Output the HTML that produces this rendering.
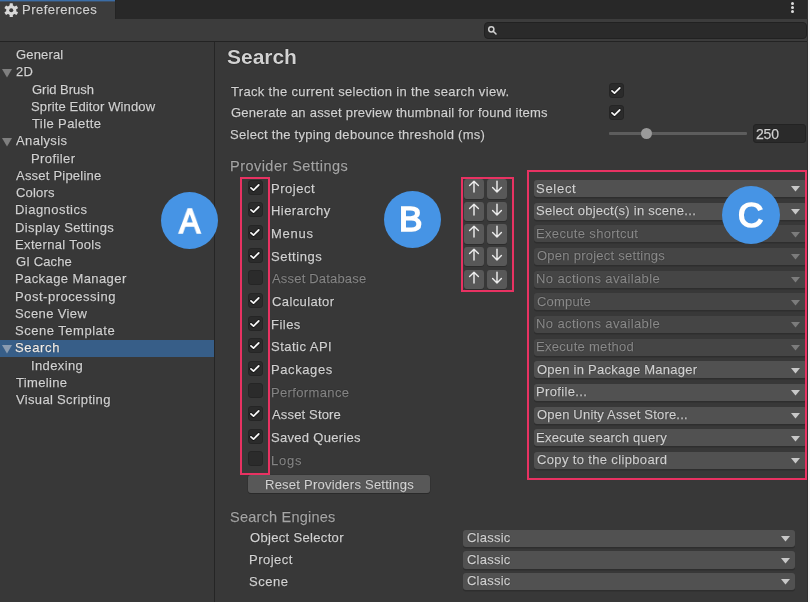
<!DOCTYPE html><html><head><meta charset="utf-8"><style>
html,body{margin:0;padding:0}
body{width:810px;height:602px;overflow:hidden;position:relative;background:#383838;font-family:"Liberation Sans",sans-serif;-webkit-font-smoothing:antialiased}
.t{position:absolute;white-space:nowrap;-webkit-text-stroke:0.25px currentColor;will-change:transform;text-shadow:0 0 0.8px rgba(0,0,0,0.9),0 0 0.8px rgba(0,0,0,0.9)}
</style></head><body>
<div style="position:absolute;left:0.00px;top:0.00px;width:810.00px;height:18.70px;background:#282828"></div>
<div style="position:absolute;left:0.00px;top:0.00px;width:115.00px;height:18.70px;background:#3c3c3c"></div>
<div style="position:absolute;left:0.00px;top:0.00px;width:115.00px;height:1.00px;background:#3b6da6"></div>
<div style="position:absolute;left:0.00px;top:1.00px;width:115.00px;height:1.00px;background:#3c4f66"></div>
<div style="position:absolute;left:115.00px;top:0.00px;width:1.00px;height:18.70px;background:#242424"></div>
<svg style="position:absolute;left:3.6px;top:2.5px" width="14.5" height="14.5" viewBox="-7.25 -7.25 14.5 14.5"><g fill="#d8d8d8">
<circle r="5"/>
<rect x="-1.6" y="-7" width="3.2" height="14" rx="0.6"/>
<rect x="-1.6" y="-7" width="3.2" height="14" rx="0.6" transform="rotate(60)"/>
<rect x="-1.6" y="-7" width="3.2" height="14" rx="0.6" transform="rotate(120)"/>
</g><circle r="2" fill="#3c3c3c"/></svg>
<div class="t" style="left:22.00px;top:1.30px;font-size:13px;line-height:17px;color:#d2d2d2;letter-spacing:0.470px;font-weight:normal;">Preferences</div>
<div style="position:absolute;left:791.15px;top:1.80px;width:3.2px;height:3.2px;border-radius:50%;background:#dcdcdc"></div>
<div style="position:absolute;left:791.15px;top:5.90px;width:3.2px;height:3.2px;border-radius:50%;background:#dcdcdc"></div>
<div style="position:absolute;left:791.15px;top:10.00px;width:3.2px;height:3.2px;border-radius:50%;background:#dcdcdc"></div>
<div style="position:absolute;left:0.00px;top:18.70px;width:810.00px;height:22.30px;background:#3c3c3c"></div>
<div style="position:absolute;left:0.00px;top:41.00px;width:810.00px;height:1.00px;background:#232323"></div>
<div style="position:absolute;left:483.70px;top:21.70px;width:323.00px;height:17.20px;background:#2a2a2a;border-radius:4px;box-sizing:border-box;border:1px solid #212121"></div>
<svg style="position:absolute;left:486px;top:24px" width="12" height="12" viewBox="0 0 12 12"><circle cx="5.3" cy="5.3" r="2.6" fill="none" stroke="#d0d0d0" stroke-width="1.5"/><path d="M7.2 7.2 L10 10" stroke="#d0d0d0" stroke-width="1.6" stroke-linecap="round"/></svg>
<div style="position:absolute;left:807.00px;top:0.00px;width:1.00px;height:602.00px;background:#303030"></div>
<div style="position:absolute;left:808.00px;top:0.00px;width:2.00px;height:602.00px;background:#f4f4f4"></div>
<div style="position:absolute;left:0.00px;top:340.00px;width:214.00px;height:17.00px;background:#375e88"></div>
<div class="t" style="left:16.40px;top:46.00px;font-size:13px;line-height:17px;color:#d2d2d2;letter-spacing:0.150px;font-weight:normal;">General</div>
<div class="t" style="left:16.40px;top:63.25px;font-size:13px;line-height:17px;color:#d2d2d2;letter-spacing:0.200px;font-weight:normal;">2D</div>
<svg style="position:absolute;left:2px;top:68.75px" width="10" height="9" viewBox="0 0 10 9"><path d="M0 0 H10 L5 8.6 Z" fill="#7f7f7f"/></svg>
<div class="t" style="left:31.60px;top:80.50px;font-size:13px;line-height:17px;color:#d2d2d2;letter-spacing:-0.011px;font-weight:normal;">Grid Brush</div>
<div class="t" style="left:30.60px;top:97.75px;font-size:13px;line-height:17px;color:#d2d2d2;letter-spacing:0.142px;font-weight:normal;">Sprite Editor Window</div>
<div class="t" style="left:31.60px;top:115.00px;font-size:13px;line-height:17px;color:#d2d2d2;letter-spacing:0.400px;font-weight:normal;">Tile Palette</div>
<div class="t" style="left:16.40px;top:132.25px;font-size:13px;line-height:17px;color:#d2d2d2;letter-spacing:0.371px;font-weight:normal;">Analysis</div>
<svg style="position:absolute;left:2px;top:137.75px" width="10" height="9" viewBox="0 0 10 9"><path d="M0 0 H10 L5 8.6 Z" fill="#7f7f7f"/></svg>
<div class="t" style="left:30.60px;top:149.50px;font-size:13px;line-height:17px;color:#d2d2d2;letter-spacing:0.400px;font-weight:normal;">Profiler</div>
<div class="t" style="left:16.40px;top:166.75px;font-size:13px;line-height:17px;color:#d2d2d2;letter-spacing:0.215px;font-weight:normal;">Asset Pipeline</div>
<div class="t" style="left:16.40px;top:184.00px;font-size:13px;line-height:17px;color:#d2d2d2;letter-spacing:0.200px;font-weight:normal;">Colors</div>
<div class="t" style="left:15.40px;top:201.25px;font-size:13px;line-height:17px;color:#d2d2d2;letter-spacing:0.470px;font-weight:normal;">Diagnostics</div>
<div class="t" style="left:15.40px;top:218.50px;font-size:13px;line-height:17px;color:#d2d2d2;letter-spacing:0.373px;font-weight:normal;">Display Settings</div>
<div class="t" style="left:15.40px;top:235.75px;font-size:13px;line-height:17px;color:#d2d2d2;letter-spacing:0.362px;font-weight:normal;">External Tools</div>
<div class="t" style="left:16.40px;top:253.00px;font-size:13px;line-height:17px;color:#d2d2d2;letter-spacing:0.114px;font-weight:normal;">GI Cache</div>
<div class="t" style="left:15.40px;top:270.25px;font-size:13px;line-height:17px;color:#d2d2d2;letter-spacing:0.407px;font-weight:normal;">Package Manager</div>
<div class="t" style="left:15.40px;top:287.50px;font-size:13px;line-height:17px;color:#d2d2d2;letter-spacing:0.514px;font-weight:normal;">Post-processing</div>
<div class="t" style="left:15.40px;top:304.75px;font-size:13px;line-height:17px;color:#d2d2d2;letter-spacing:0.378px;font-weight:normal;">Scene View</div>
<div class="t" style="left:15.40px;top:322.00px;font-size:13px;line-height:17px;color:#d2d2d2;letter-spacing:0.515px;font-weight:normal;">Scene Template</div>
<div class="t" style="left:15.40px;top:339.25px;font-size:13px;line-height:17px;color:#eeeeee;letter-spacing:0.640px;font-weight:normal;">Search</div>
<svg style="position:absolute;left:2px;top:344.75px" width="10" height="9" viewBox="0 0 10 9"><path d="M0 0 H10 L5 8.6 Z" fill="#8a9bb0"/></svg>
<div class="t" style="left:30.60px;top:356.50px;font-size:13px;line-height:17px;color:#d2d2d2;letter-spacing:0.371px;font-weight:normal;">Indexing</div>
<div class="t" style="left:16.40px;top:373.75px;font-size:13px;line-height:17px;color:#d2d2d2;letter-spacing:0.343px;font-weight:normal;">Timeline</div>
<div class="t" style="left:16.40px;top:391.00px;font-size:13px;line-height:17px;color:#d2d2d2;letter-spacing:0.333px;font-weight:normal;">Visual Scripting</div>
<div style="position:absolute;left:214.00px;top:42.00px;width:1.00px;height:560.00px;background:#252525"></div>
<div class="t" style="left:226.50px;top:43.12px;font-size:21px;line-height:27px;color:#d2d2d2;letter-spacing:-0.020px;font-weight:bold;-webkit-text-stroke:0">Search</div>
<div class="t" style="left:231.20px;top:82.90px;font-size:13px;line-height:17px;color:#d2d2d2;letter-spacing:0.322px;font-weight:normal;">Track the current selection in the search view.</div>
<div class="t" style="left:230.80px;top:103.90px;font-size:13px;line-height:17px;color:#d2d2d2;letter-spacing:0.232px;font-weight:normal;">Generate an asset preview thumbnail for found items</div>
<div class="t" style="left:230.00px;top:125.50px;font-size:13px;line-height:17px;color:#d2d2d2;letter-spacing:0.285px;font-weight:normal;">Select the typing debounce threshold (ms)</div>
<div style="position:absolute;left:609.00px;top:83.00px;width:15px;height:15px;box-sizing:border-box;background:#2b2b2b;border:1px solid #252525;border-radius:3px"></div>
<svg width="15" height="15" viewBox="0 0 15 15" style="position:absolute;left:609.00px;top:83.00px"><path d="M3 7.9 L5.5 10.1 L10.7 5.0" fill="none" stroke="#0c0c0c" stroke-width="3.4" stroke-linecap="round" stroke-linejoin="round" opacity="0.7"/><path d="M3 7.9 L5.5 10.1 L10.7 5.0" fill="none" stroke="#f4f4f4" stroke-width="1.8" stroke-linecap="round" stroke-linejoin="round"/></svg>
<div style="position:absolute;left:609.00px;top:104.50px;width:15px;height:15px;box-sizing:border-box;background:#2b2b2b;border:1px solid #252525;border-radius:3px"></div>
<svg width="15" height="15" viewBox="0 0 15 15" style="position:absolute;left:609.00px;top:104.50px"><path d="M3 7.9 L5.5 10.1 L10.7 5.0" fill="none" stroke="#0c0c0c" stroke-width="3.4" stroke-linecap="round" stroke-linejoin="round" opacity="0.7"/><path d="M3 7.9 L5.5 10.1 L10.7 5.0" fill="none" stroke="#f4f4f4" stroke-width="1.8" stroke-linecap="round" stroke-linejoin="round"/></svg>
<div style="position:absolute;left:609.00px;top:132.40px;width:138.00px;height:2.40px;background:#5d5d5d;border-radius:1px"></div>
<div style="position:absolute;left:640.5px;top:127.7px;width:11.6px;height:11.6px;border-radius:50%;background:#9a9a9a"></div>
<div style="position:absolute;left:753.00px;top:124.00px;width:53.00px;height:19.00px;background:#2a2a2a;border-radius:3px;box-sizing:border-box;border:1px solid #232323"></div>
<div class="t" style="left:756.00px;top:125.05px;font-size:14px;line-height:18px;color:#d2d2d2;letter-spacing:-0.200px;font-weight:normal;">250</div>
<div class="t" style="left:230.40px;top:157.48px;font-size:14.5px;line-height:19px;color:#a5a5a5;letter-spacing:0.463px;font-weight:normal;">Provider Settings</div>
<div style="position:absolute;left:248.00px;top:179.60px;width:15px;height:15px;box-sizing:border-box;background:#2b2b2b;border:1px solid #252525;border-radius:3px"></div>
<svg width="15" height="15" viewBox="0 0 15 15" style="position:absolute;left:248.00px;top:179.60px"><path d="M3 7.9 L5.5 10.1 L10.7 5.0" fill="none" stroke="#0c0c0c" stroke-width="3.4" stroke-linecap="round" stroke-linejoin="round" opacity="0.7"/><path d="M3 7.9 L5.5 10.1 L10.7 5.0" fill="none" stroke="#f4f4f4" stroke-width="1.8" stroke-linecap="round" stroke-linejoin="round"/></svg>
<div class="t" style="left:271.40px;top:179.80px;font-size:13px;line-height:17px;color:#d2d2d2;letter-spacing:0.517px;font-weight:normal;">Project</div>
<div style="position:absolute;left:533.50px;top:180.00px;width:273.50px;height:17.20px;background:#515151;border-radius:3px;box-shadow:0 1.5px 0 #2e2e2e"></div>
<div class="t" style="left:536.10px;top:179.50px;font-size:13px;line-height:17px;color:#d2d2d2;letter-spacing:0.720px;font-weight:normal;">Select</div>
<svg style="position:absolute;left:791.40px;top:186.40px" width="9" height="6" viewBox="0 0 9 6"><path d="M0 0 H9 L4.5 5.5 Z" fill="#c8c8c8"/></svg>
<div style="position:absolute;left:464px;top:179.00px;width:20px;height:19.5px;background:#585858;border-radius:3px;box-shadow:0 1px 0 #2c2c2c"></div>
<svg style="position:absolute;left:464px;top:179.00px" width="20" height="15" viewBox="0 0 20 15"><path d="M5.6 6.6 L10 2.3 L14.4 6.6 M10 2.4 V12.9" fill="none" stroke="#ececec" stroke-width="1.45" stroke-linecap="round" stroke-linejoin="round"/></svg>
<div style="position:absolute;left:487px;top:179.00px;width:20px;height:19.5px;background:#585858;border-radius:3px;box-shadow:0 1px 0 #2c2c2c"></div>
<svg style="position:absolute;left:487px;top:179.00px" width="20" height="15" viewBox="0 0 20 15"><path d="M5.6 8.6 L10 12.9 L14.4 8.6 M10 2.1 V12.8" fill="none" stroke="#ececec" stroke-width="1.45" stroke-linecap="round" stroke-linejoin="round"/></svg>
<div style="position:absolute;left:248.00px;top:202.25px;width:15px;height:15px;box-sizing:border-box;background:#2b2b2b;border:1px solid #252525;border-radius:3px"></div>
<svg width="15" height="15" viewBox="0 0 15 15" style="position:absolute;left:248.00px;top:202.25px"><path d="M3 7.9 L5.5 10.1 L10.7 5.0" fill="none" stroke="#0c0c0c" stroke-width="3.4" stroke-linecap="round" stroke-linejoin="round" opacity="0.7"/><path d="M3 7.9 L5.5 10.1 L10.7 5.0" fill="none" stroke="#f4f4f4" stroke-width="1.8" stroke-linecap="round" stroke-linejoin="round"/></svg>
<div class="t" style="left:271.40px;top:202.45px;font-size:13px;line-height:17px;color:#d2d2d2;letter-spacing:0.438px;font-weight:normal;">Hierarchy</div>
<div style="position:absolute;left:533.50px;top:202.65px;width:273.50px;height:17.20px;background:#515151;border-radius:3px;box-shadow:0 1.5px 0 #2e2e2e"></div>
<div class="t" style="left:536.10px;top:202.15px;font-size:13px;line-height:17px;color:#d2d2d2;letter-spacing:0.270px;font-weight:normal;">Select object(s) in scene...</div>
<svg style="position:absolute;left:791.40px;top:209.05px" width="9" height="6" viewBox="0 0 9 6"><path d="M0 0 H9 L4.5 5.5 Z" fill="#c8c8c8"/></svg>
<div style="position:absolute;left:464px;top:201.65px;width:20px;height:19.5px;background:#585858;border-radius:3px;box-shadow:0 1px 0 #2c2c2c"></div>
<svg style="position:absolute;left:464px;top:201.65px" width="20" height="15" viewBox="0 0 20 15"><path d="M5.6 6.6 L10 2.3 L14.4 6.6 M10 2.4 V12.9" fill="none" stroke="#ececec" stroke-width="1.45" stroke-linecap="round" stroke-linejoin="round"/></svg>
<div style="position:absolute;left:487px;top:201.65px;width:20px;height:19.5px;background:#585858;border-radius:3px;box-shadow:0 1px 0 #2c2c2c"></div>
<svg style="position:absolute;left:487px;top:201.65px" width="20" height="15" viewBox="0 0 20 15"><path d="M5.6 8.6 L10 12.9 L14.4 8.6 M10 2.1 V12.8" fill="none" stroke="#ececec" stroke-width="1.45" stroke-linecap="round" stroke-linejoin="round"/></svg>
<div style="position:absolute;left:248.00px;top:224.90px;width:15px;height:15px;box-sizing:border-box;background:#2b2b2b;border:1px solid #252525;border-radius:3px"></div>
<svg width="15" height="15" viewBox="0 0 15 15" style="position:absolute;left:248.00px;top:224.90px"><path d="M3 7.9 L5.5 10.1 L10.7 5.0" fill="none" stroke="#0c0c0c" stroke-width="3.4" stroke-linecap="round" stroke-linejoin="round" opacity="0.7"/><path d="M3 7.9 L5.5 10.1 L10.7 5.0" fill="none" stroke="#f4f4f4" stroke-width="1.8" stroke-linecap="round" stroke-linejoin="round"/></svg>
<div class="t" style="left:271.40px;top:225.10px;font-size:13px;line-height:17px;color:#d2d2d2;letter-spacing:0.750px;font-weight:normal;">Menus</div>
<div style="position:absolute;left:533.50px;top:225.30px;width:273.50px;height:17.20px;background:#454545;border-radius:3px;box-shadow:0 1.5px 0 #2e2e2e"></div>
<div class="t" style="left:536.10px;top:224.80px;font-size:13px;line-height:17px;color:#8a8a8a;letter-spacing:0.340px;font-weight:normal;">Execute shortcut</div>
<svg style="position:absolute;left:791.40px;top:231.70px" width="9" height="6" viewBox="0 0 9 6"><path d="M0 0 H9 L4.5 5.5 Z" fill="#7c7c7c"/></svg>
<div style="position:absolute;left:464px;top:224.30px;width:20px;height:19.5px;background:#585858;border-radius:3px;box-shadow:0 1px 0 #2c2c2c"></div>
<svg style="position:absolute;left:464px;top:224.30px" width="20" height="15" viewBox="0 0 20 15"><path d="M5.6 6.6 L10 2.3 L14.4 6.6 M10 2.4 V12.9" fill="none" stroke="#ececec" stroke-width="1.45" stroke-linecap="round" stroke-linejoin="round"/></svg>
<div style="position:absolute;left:487px;top:224.30px;width:20px;height:19.5px;background:#585858;border-radius:3px;box-shadow:0 1px 0 #2c2c2c"></div>
<svg style="position:absolute;left:487px;top:224.30px" width="20" height="15" viewBox="0 0 20 15"><path d="M5.6 8.6 L10 12.9 L14.4 8.6 M10 2.1 V12.8" fill="none" stroke="#ececec" stroke-width="1.45" stroke-linecap="round" stroke-linejoin="round"/></svg>
<div style="position:absolute;left:248.00px;top:247.55px;width:15px;height:15px;box-sizing:border-box;background:#2b2b2b;border:1px solid #252525;border-radius:3px"></div>
<svg width="15" height="15" viewBox="0 0 15 15" style="position:absolute;left:248.00px;top:247.55px"><path d="M3 7.9 L5.5 10.1 L10.7 5.0" fill="none" stroke="#0c0c0c" stroke-width="3.4" stroke-linecap="round" stroke-linejoin="round" opacity="0.7"/><path d="M3 7.9 L5.5 10.1 L10.7 5.0" fill="none" stroke="#f4f4f4" stroke-width="1.8" stroke-linecap="round" stroke-linejoin="round"/></svg>
<div class="t" style="left:271.40px;top:247.75px;font-size:13px;line-height:17px;color:#d2d2d2;letter-spacing:0.529px;font-weight:normal;">Settings</div>
<div style="position:absolute;left:533.50px;top:247.95px;width:273.50px;height:17.20px;background:#454545;border-radius:3px;box-shadow:0 1.5px 0 #2e2e2e"></div>
<div class="t" style="left:537.10px;top:247.45px;font-size:13px;line-height:17px;color:#8a8a8a;letter-spacing:0.250px;font-weight:normal;">Open project settings</div>
<svg style="position:absolute;left:791.40px;top:254.35px" width="9" height="6" viewBox="0 0 9 6"><path d="M0 0 H9 L4.5 5.5 Z" fill="#7c7c7c"/></svg>
<div style="position:absolute;left:464px;top:246.95px;width:20px;height:19.5px;background:#585858;border-radius:3px;box-shadow:0 1px 0 #2c2c2c"></div>
<svg style="position:absolute;left:464px;top:246.95px" width="20" height="15" viewBox="0 0 20 15"><path d="M5.6 6.6 L10 2.3 L14.4 6.6 M10 2.4 V12.9" fill="none" stroke="#ececec" stroke-width="1.45" stroke-linecap="round" stroke-linejoin="round"/></svg>
<div style="position:absolute;left:487px;top:246.95px;width:20px;height:19.5px;background:#585858;border-radius:3px;box-shadow:0 1px 0 #2c2c2c"></div>
<svg style="position:absolute;left:487px;top:246.95px" width="20" height="15" viewBox="0 0 20 15"><path d="M5.6 8.6 L10 12.9 L14.4 8.6 M10 2.1 V12.8" fill="none" stroke="#ececec" stroke-width="1.45" stroke-linecap="round" stroke-linejoin="round"/></svg>
<div style="position:absolute;left:248.00px;top:270.20px;width:15px;height:15px;box-sizing:border-box;background:#2b2b2b;border:1px solid #252525;border-radius:3px"></div>
<div class="t" style="left:272.40px;top:270.40px;font-size:13px;line-height:17px;color:#858585;letter-spacing:0.185px;font-weight:normal;">Asset Database</div>
<div style="position:absolute;left:533.50px;top:270.60px;width:273.50px;height:17.20px;background:#454545;border-radius:3px;box-shadow:0 1.5px 0 #2e2e2e"></div>
<div class="t" style="left:536.10px;top:270.10px;font-size:13px;line-height:17px;color:#8a8a8a;letter-spacing:0.389px;font-weight:normal;">No actions available</div>
<svg style="position:absolute;left:791.40px;top:277.00px" width="9" height="6" viewBox="0 0 9 6"><path d="M0 0 H9 L4.5 5.5 Z" fill="#7c7c7c"/></svg>
<div style="position:absolute;left:464px;top:269.60px;width:20px;height:19.5px;background:#585858;border-radius:3px;box-shadow:0 1px 0 #2c2c2c"></div>
<svg style="position:absolute;left:464px;top:269.60px" width="20" height="15" viewBox="0 0 20 15"><path d="M5.6 6.6 L10 2.3 L14.4 6.6 M10 2.4 V12.9" fill="none" stroke="#ececec" stroke-width="1.45" stroke-linecap="round" stroke-linejoin="round"/></svg>
<div style="position:absolute;left:487px;top:269.60px;width:20px;height:19.5px;background:#585858;border-radius:3px;box-shadow:0 1px 0 #2c2c2c"></div>
<svg style="position:absolute;left:487px;top:269.60px" width="20" height="15" viewBox="0 0 20 15"><path d="M5.6 8.6 L10 12.9 L14.4 8.6 M10 2.1 V12.8" fill="none" stroke="#ececec" stroke-width="1.45" stroke-linecap="round" stroke-linejoin="round"/></svg>
<div style="position:absolute;left:248.00px;top:292.85px;width:15px;height:15px;box-sizing:border-box;background:#2b2b2b;border:1px solid #252525;border-radius:3px"></div>
<svg width="15" height="15" viewBox="0 0 15 15" style="position:absolute;left:248.00px;top:292.85px"><path d="M3 7.9 L5.5 10.1 L10.7 5.0" fill="none" stroke="#0c0c0c" stroke-width="3.4" stroke-linecap="round" stroke-linejoin="round" opacity="0.7"/><path d="M3 7.9 L5.5 10.1 L10.7 5.0" fill="none" stroke="#f4f4f4" stroke-width="1.8" stroke-linecap="round" stroke-linejoin="round"/></svg>
<div class="t" style="left:272.40px;top:293.05px;font-size:13px;line-height:17px;color:#d2d2d2;letter-spacing:0.389px;font-weight:normal;">Calculator</div>
<div style="position:absolute;left:533.50px;top:293.25px;width:273.50px;height:17.20px;background:#454545;border-radius:3px;box-shadow:0 1.5px 0 #2e2e2e"></div>
<div class="t" style="left:537.10px;top:292.75px;font-size:13px;line-height:17px;color:#8a8a8a;letter-spacing:0.183px;font-weight:normal;">Compute</div>
<svg style="position:absolute;left:791.40px;top:299.65px" width="9" height="6" viewBox="0 0 9 6"><path d="M0 0 H9 L4.5 5.5 Z" fill="#7c7c7c"/></svg>
<div style="position:absolute;left:248.00px;top:315.50px;width:15px;height:15px;box-sizing:border-box;background:#2b2b2b;border:1px solid #252525;border-radius:3px"></div>
<svg width="15" height="15" viewBox="0 0 15 15" style="position:absolute;left:248.00px;top:315.50px"><path d="M3 7.9 L5.5 10.1 L10.7 5.0" fill="none" stroke="#0c0c0c" stroke-width="3.4" stroke-linecap="round" stroke-linejoin="round" opacity="0.7"/><path d="M3 7.9 L5.5 10.1 L10.7 5.0" fill="none" stroke="#f4f4f4" stroke-width="1.8" stroke-linecap="round" stroke-linejoin="round"/></svg>
<div class="t" style="left:271.40px;top:315.70px;font-size:13px;line-height:17px;color:#d2d2d2;letter-spacing:0.475px;font-weight:normal;">Files</div>
<div style="position:absolute;left:533.50px;top:315.90px;width:273.50px;height:17.20px;background:#454545;border-radius:3px;box-shadow:0 1.5px 0 #2e2e2e"></div>
<div class="t" style="left:536.10px;top:315.40px;font-size:13px;line-height:17px;color:#8a8a8a;letter-spacing:0.389px;font-weight:normal;">No actions available</div>
<svg style="position:absolute;left:791.40px;top:322.30px" width="9" height="6" viewBox="0 0 9 6"><path d="M0 0 H9 L4.5 5.5 Z" fill="#7c7c7c"/></svg>
<div style="position:absolute;left:248.00px;top:338.15px;width:15px;height:15px;box-sizing:border-box;background:#2b2b2b;border:1px solid #252525;border-radius:3px"></div>
<svg width="15" height="15" viewBox="0 0 15 15" style="position:absolute;left:248.00px;top:338.15px"><path d="M3 7.9 L5.5 10.1 L10.7 5.0" fill="none" stroke="#0c0c0c" stroke-width="3.4" stroke-linecap="round" stroke-linejoin="round" opacity="0.7"/><path d="M3 7.9 L5.5 10.1 L10.7 5.0" fill="none" stroke="#f4f4f4" stroke-width="1.8" stroke-linecap="round" stroke-linejoin="round"/></svg>
<div class="t" style="left:271.40px;top:338.35px;font-size:13px;line-height:17px;color:#d2d2d2;letter-spacing:0.478px;font-weight:normal;">Static API</div>
<div style="position:absolute;left:533.50px;top:338.55px;width:273.50px;height:17.20px;background:#454545;border-radius:3px;box-shadow:0 1.5px 0 #2e2e2e"></div>
<div class="t" style="left:536.10px;top:338.05px;font-size:13px;line-height:17px;color:#8a8a8a;letter-spacing:0.300px;font-weight:normal;">Execute method</div>
<svg style="position:absolute;left:791.40px;top:344.95px" width="9" height="6" viewBox="0 0 9 6"><path d="M0 0 H9 L4.5 5.5 Z" fill="#7c7c7c"/></svg>
<div style="position:absolute;left:248.00px;top:360.80px;width:15px;height:15px;box-sizing:border-box;background:#2b2b2b;border:1px solid #252525;border-radius:3px"></div>
<svg width="15" height="15" viewBox="0 0 15 15" style="position:absolute;left:248.00px;top:360.80px"><path d="M3 7.9 L5.5 10.1 L10.7 5.0" fill="none" stroke="#0c0c0c" stroke-width="3.4" stroke-linecap="round" stroke-linejoin="round" opacity="0.7"/><path d="M3 7.9 L5.5 10.1 L10.7 5.0" fill="none" stroke="#f4f4f4" stroke-width="1.8" stroke-linecap="round" stroke-linejoin="round"/></svg>
<div class="t" style="left:271.40px;top:361.00px;font-size:13px;line-height:17px;color:#d2d2d2;letter-spacing:0.586px;font-weight:normal;">Packages</div>
<div style="position:absolute;left:533.50px;top:361.20px;width:273.50px;height:17.20px;background:#515151;border-radius:3px;box-shadow:0 1.5px 0 #2e2e2e"></div>
<div class="t" style="left:537.10px;top:360.70px;font-size:13px;line-height:17px;color:#d2d2d2;letter-spacing:0.241px;font-weight:normal;">Open in Package Manager</div>
<svg style="position:absolute;left:791.40px;top:367.60px" width="9" height="6" viewBox="0 0 9 6"><path d="M0 0 H9 L4.5 5.5 Z" fill="#c8c8c8"/></svg>
<div style="position:absolute;left:248.00px;top:383.45px;width:15px;height:15px;box-sizing:border-box;background:#2b2b2b;border:1px solid #252525;border-radius:3px"></div>
<div class="t" style="left:271.40px;top:383.65px;font-size:13px;line-height:17px;color:#858585;letter-spacing:0.360px;font-weight:normal;">Performance</div>
<div style="position:absolute;left:533.50px;top:383.85px;width:273.50px;height:17.20px;background:#515151;border-radius:3px;box-shadow:0 1.5px 0 #2e2e2e"></div>
<div class="t" style="left:536.10px;top:383.35px;font-size:13px;line-height:17px;color:#d2d2d2;letter-spacing:0.356px;font-weight:normal;">Profile...</div>
<svg style="position:absolute;left:791.40px;top:390.25px" width="9" height="6" viewBox="0 0 9 6"><path d="M0 0 H9 L4.5 5.5 Z" fill="#c8c8c8"/></svg>
<div style="position:absolute;left:248.00px;top:406.10px;width:15px;height:15px;box-sizing:border-box;background:#2b2b2b;border:1px solid #252525;border-radius:3px"></div>
<svg width="15" height="15" viewBox="0 0 15 15" style="position:absolute;left:248.00px;top:406.10px"><path d="M3 7.9 L5.5 10.1 L10.7 5.0" fill="none" stroke="#0c0c0c" stroke-width="3.4" stroke-linecap="round" stroke-linejoin="round" opacity="0.7"/><path d="M3 7.9 L5.5 10.1 L10.7 5.0" fill="none" stroke="#f4f4f4" stroke-width="1.8" stroke-linecap="round" stroke-linejoin="round"/></svg>
<div class="t" style="left:272.40px;top:406.30px;font-size:13px;line-height:17px;color:#d2d2d2;letter-spacing:0.160px;font-weight:normal;">Asset Store</div>
<div style="position:absolute;left:533.50px;top:406.50px;width:273.50px;height:17.20px;background:#515151;border-radius:3px;box-shadow:0 1.5px 0 #2e2e2e"></div>
<div class="t" style="left:537.10px;top:406.00px;font-size:13px;line-height:17px;color:#d2d2d2;letter-spacing:0.192px;font-weight:normal;">Open Unity Asset Store...</div>
<svg style="position:absolute;left:791.40px;top:412.90px" width="9" height="6" viewBox="0 0 9 6"><path d="M0 0 H9 L4.5 5.5 Z" fill="#c8c8c8"/></svg>
<div style="position:absolute;left:248.00px;top:428.75px;width:15px;height:15px;box-sizing:border-box;background:#2b2b2b;border:1px solid #252525;border-radius:3px"></div>
<svg width="15" height="15" viewBox="0 0 15 15" style="position:absolute;left:248.00px;top:428.75px"><path d="M3 7.9 L5.5 10.1 L10.7 5.0" fill="none" stroke="#0c0c0c" stroke-width="3.4" stroke-linecap="round" stroke-linejoin="round" opacity="0.7"/><path d="M3 7.9 L5.5 10.1 L10.7 5.0" fill="none" stroke="#f4f4f4" stroke-width="1.8" stroke-linecap="round" stroke-linejoin="round"/></svg>
<div class="t" style="left:271.40px;top:428.95px;font-size:13px;line-height:17px;color:#d2d2d2;letter-spacing:0.300px;font-weight:normal;">Saved Queries</div>
<div style="position:absolute;left:533.50px;top:429.15px;width:273.50px;height:17.20px;background:#515151;border-radius:3px;box-shadow:0 1.5px 0 #2e2e2e"></div>
<div class="t" style="left:536.10px;top:428.65px;font-size:13px;line-height:17px;color:#d2d2d2;letter-spacing:0.258px;font-weight:normal;">Execute search query</div>
<svg style="position:absolute;left:791.40px;top:435.55px" width="9" height="6" viewBox="0 0 9 6"><path d="M0 0 H9 L4.5 5.5 Z" fill="#c8c8c8"/></svg>
<div style="position:absolute;left:248.00px;top:451.40px;width:15px;height:15px;box-sizing:border-box;background:#2b2b2b;border:1px solid #252525;border-radius:3px"></div>
<div class="t" style="left:271.40px;top:451.60px;font-size:13px;line-height:17px;color:#858585;letter-spacing:0.767px;font-weight:normal;">Logs</div>
<div style="position:absolute;left:533.50px;top:451.80px;width:273.50px;height:17.20px;background:#515151;border-radius:3px;box-shadow:0 1.5px 0 #2e2e2e"></div>
<div class="t" style="left:537.10px;top:451.30px;font-size:13px;line-height:17px;color:#d2d2d2;letter-spacing:0.355px;font-weight:normal;">Copy to the clipboard</div>
<svg style="position:absolute;left:791.40px;top:458.20px" width="9" height="6" viewBox="0 0 9 6"><path d="M0 0 H9 L4.5 5.5 Z" fill="#c8c8c8"/></svg>
<div style="position:absolute;left:248.4px;top:474.8px;width:181.2px;height:18.3px;background:#585858;border-radius:3px;box-shadow:0 1px 0 #2a2a2a,0 0 0 0.6px #303030"></div>
<div class="t" style="left:264.70px;top:475.90px;font-size:13px;line-height:17px;color:#d2d2d2;letter-spacing:0.243px;font-weight:normal;">Reset Providers Settings</div>
<div class="t" style="left:230.40px;top:507.98px;font-size:14.5px;line-height:19px;color:#a5a5a5;letter-spacing:0.231px;font-weight:normal;">Search Engines</div>
<div class="t" style="left:250.00px;top:529.40px;font-size:13px;line-height:17px;color:#d2d2d2;letter-spacing:0.329px;font-weight:normal;">Object Selector</div>
<div style="position:absolute;left:463.00px;top:529.60px;width:332.00px;height:17.60px;background:#515151;border-radius:3px;box-shadow:0 1.5px 0 #2e2e2e"></div>
<div class="t" style="left:466.60px;top:529.10px;font-size:13px;line-height:17px;color:#d2d2d2;letter-spacing:0.233px;font-weight:normal;">Classic</div>
<svg style="position:absolute;left:780.50px;top:536.00px" width="9" height="6" viewBox="0 0 9 6"><path d="M0 0 H9 L4.5 5.5 Z" fill="#c8c8c8"/></svg>
<div class="t" style="left:249.00px;top:551.40px;font-size:13px;line-height:17px;color:#d2d2d2;letter-spacing:0.467px;font-weight:normal;">Project</div>
<div style="position:absolute;left:463.00px;top:551.20px;width:332.00px;height:17.60px;background:#515151;border-radius:3px;box-shadow:0 1.5px 0 #2e2e2e"></div>
<div class="t" style="left:466.60px;top:550.70px;font-size:13px;line-height:17px;color:#d2d2d2;letter-spacing:0.233px;font-weight:normal;">Classic</div>
<svg style="position:absolute;left:780.50px;top:557.60px" width="9" height="6" viewBox="0 0 9 6"><path d="M0 0 H9 L4.5 5.5 Z" fill="#c8c8c8"/></svg>
<div class="t" style="left:249.00px;top:572.60px;font-size:13px;line-height:17px;color:#d2d2d2;letter-spacing:0.500px;font-weight:normal;">Scene</div>
<div style="position:absolute;left:463.00px;top:572.50px;width:332.00px;height:17.60px;background:#515151;border-radius:3px;box-shadow:0 1.5px 0 #2e2e2e"></div>
<div class="t" style="left:466.60px;top:572.00px;font-size:13px;line-height:17px;color:#d2d2d2;letter-spacing:0.233px;font-weight:normal;">Classic</div>
<svg style="position:absolute;left:780.50px;top:578.90px" width="9" height="6" viewBox="0 0 9 6"><path d="M0 0 H9 L4.5 5.5 Z" fill="#c8c8c8"/></svg>
<div style="position:absolute;left:240.00px;top:177.00px;width:30.40px;height:297.50px;border:2.3px solid #e83262;box-sizing:border-box"></div>
<div style="position:absolute;left:461.00px;top:177.00px;width:53.00px;height:115.00px;border:2.3px solid #e83262;box-sizing:border-box"></div>
<div style="position:absolute;left:527.00px;top:170.00px;width:280.30px;height:310.00px;border:2.3px solid #e83262;box-sizing:border-box"></div>
<div style="position:absolute;left:161.30px;top:192.10px;width:57px;height:57px;border-radius:50%;background:#4694e5"></div>
<div class="t" style="left:177.90px;top:198.37px;font-size:35px;line-height:46px;color:#ffffff;letter-spacing:0.000px;font-weight:normal;-webkit-text-stroke:1.7px #fff;transform:scaleX(0.9);transform-origin:12px 0">A</div>
<div style="position:absolute;left:383.60px;top:190.50px;width:57px;height:57px;border-radius:50%;background:#4694e5"></div>
<div class="t" style="left:398.90px;top:195.77px;font-size:35px;line-height:46px;color:#ffffff;letter-spacing:0.000px;font-weight:normal;-webkit-text-stroke:1.7px #fff;">B</div>
<div style="position:absolute;left:722.00px;top:185.90px;width:58px;height:58px;border-radius:50%;background:#4694e5"></div>
<div class="t" style="left:737.50px;top:191.67px;font-size:35px;line-height:46px;color:#ffffff;letter-spacing:0.000px;font-weight:normal;-webkit-text-stroke:1.7px #fff;">C</div>
</body></html>
